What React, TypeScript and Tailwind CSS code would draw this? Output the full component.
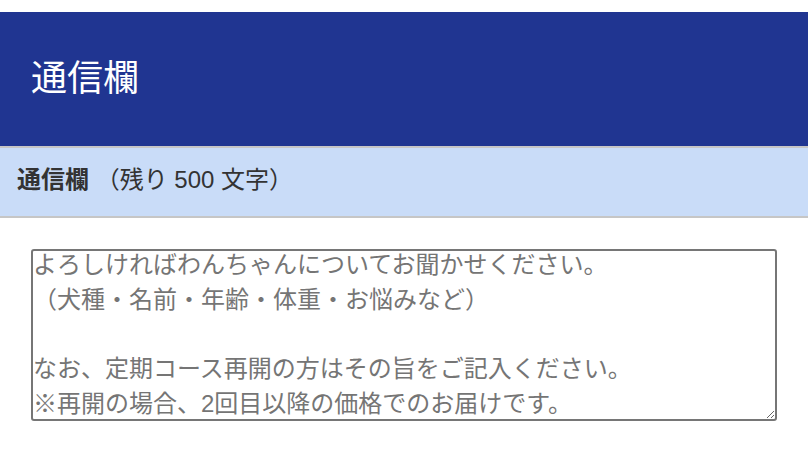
import React from 'react';

const font = { fontFamily: '"Liberation Sans", Arial, "Noto Sans CJK JP", sans-serif' };

export default function App() {
  return (
    <div className="min-h-screen bg-white pt-[12px]" style={font}>
      {/* ヘッダー */}
      <header className="h-[134px] bg-[#203591] flex items-center px-[31px]">
        <h1 className="text-[36px] leading-none text-white font-normal">通信欄</h1>
      </header>

      {/* 見出し */}
      <div className="h-[72px] bg-[#c9dcf8] border-y-2 border-[#c6c6c6] flex items-center px-[17px] pb-[5px]">
        <p className="text-[24px] leading-none text-[#333333]">
          <span className="font-bold">通信欄</span> （残り 500 文字）
        </p>
      </div>

      {/* 入力欄 */}
      <div className="p-[31px]">
        <div className="h-[172px] border-2 border-[#767676] rounded-[3px] overflow-hidden">
          <textarea
            className="block w-full h-[171px] -mt-[3px] border-0 p-0 text-[24px] leading-[34.75px] text-[#333333] placeholder:text-[#757575] resize-y outline-none bg-transparent"
            style={font}
            placeholder={
              'よろしければわんちゃんについてお聞かせください。\n（犬種・名前・年齢・体重・お悩みなど）\n\nなお、定期コース再開の方はその旨をご記入ください。\n※再開の場合、2回目以降の価格でのお届けです。'
            }
          />
        </div>
      </div>
    </div>
  );
}
